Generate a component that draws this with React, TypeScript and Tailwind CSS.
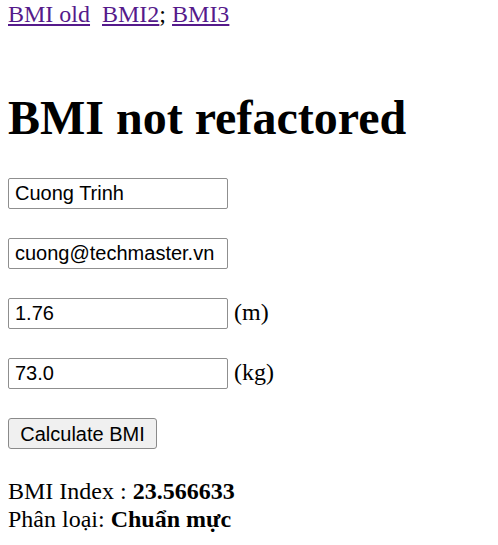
import { useState } from 'react';

export default function App() {
    const [name, setName] = useState('Cuong Trinh');
    const [email, setEmail] = useState('cuong@techmaster.vn');
    const [height, setHeight] = useState('1.76');
    const [weight, setWeight] = useState('73.0');

    const inputClass =
        "w-[220px] h-[31px] border border-[#8f8f8f] rounded-[2px] pl-[6px] pr-[3px] bg-white text-black text-[20px] font-['Liberation_Sans',Arial,sans-serif] outline-none";

    return (
        <div className="min-h-screen bg-white text-black px-2 text-[24px] font-['Liberation_Serif','Times_New_Roman',serif]">
            {/* nav links */}
            <div className="pt-px leading-[26px]">
                <a href="#" className="text-[#551a8b] underline">BMI old</a>
                {'\u00a0 '}
                <a href="#" className="text-[#551a8b] underline">BMI2</a>;{' '}
                <a href="#" className="text-[#551a8b] underline">BMI3</a>
            </div>

            <h1 className="mt-[64px] text-[48px] leading-[53px] font-bold">BMI not refactored</h1>

            <form className="mt-[34px] flex flex-col gap-[29px] items-start" onSubmit={(e) => e.preventDefault()}>
                <input className={inputClass} value={name} onChange={(e) => setName(e.target.value)} />
                <input className={inputClass} value={email} onChange={(e) => setEmail(e.target.value)} />
                <div className="flex items-start gap-[6px] h-[31px]">
                    <input className={inputClass} value={height} onChange={(e) => setHeight(e.target.value)} />
                    <span className="leading-[28px]">(m)</span>
                </div>
                <div className="flex items-start gap-[6px] h-[31px]">
                    <input className={inputClass} value={weight} onChange={(e) => setWeight(e.target.value)} />
                    <span className="leading-[28px]">(kg)</span>
                </div>
                <button
                    type="submit"
                    className="w-[149px] h-[31px] border border-[#8a8a8a] rounded-[3px] bg-[#f0f0f0] text-black text-[20px] font-['Liberation_Sans',Arial,sans-serif]"
                >
                    Calculate BMI
                </button>
            </form>

            <div className="mt-[28px] leading-[28px]">
                <div>
                    BMI Index : <b>23.566633</b>
                </div>
                <div>
                    Phân loại: <b>Chuẩn mực</b>
                </div>
            </div>
        </div>
    );
}
